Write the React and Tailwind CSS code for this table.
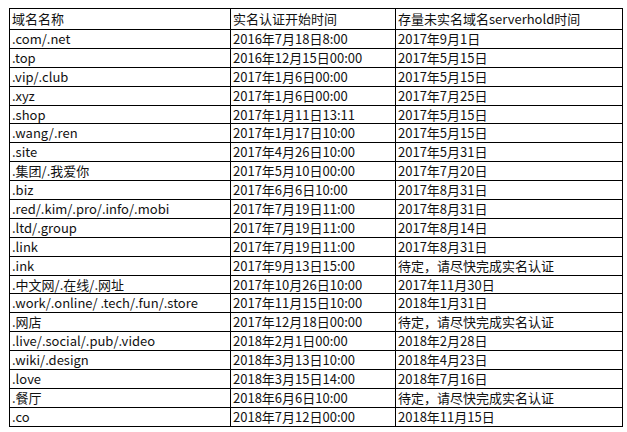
const rows = [
  ['.com/.net', '2016年7月18日8:00', '2017年9月1日'],
  ['.top', '2016年12月15日00:00', '2017年5月15日'],
  ['.vip/.club', '2017年1月6日00:00', '2017年5月15日'],
  ['.xyz', '2017年1月6日00:00', '2017年7月25日'],
  ['.shop', '2017年1月11日13:11', '2017年5月15日'],
  ['.wang/.ren', '2017年1月17日10:00', '2017年5月15日'],
  ['.site', '2017年4月26日10:00', '2017年5月31日'],
  ['.集团/.我爱你', '2017年5月10日00:00', '2017年7月20日'],
  ['.biz', '2017年6月6日10:00', '2017年8月31日'],
  ['.red/.kim/.pro/.info/.mobi', '2017年7月19日11:00', '2017年8月31日'],
  ['.ltd/.group', '2017年7月19日11:00', '2017年8月14日'],
  ['.link', '2017年7月19日11:00', '2017年8月31日'],
  ['.ink', '2017年9月13日15:00', '待定，请尽快完成实名认证'],
  ['.中文网/.在线/.网址', '2017年10月26日10:00', '2017年11月30日'],
  ['.work/.online/ .tech/.fun/.store', '2017年11月15日10:00', '2018年1月31日'],
  ['.网店', '2017年12月18日00:00', '待定，请尽快完成实名认证'],
  ['.live/.social/.pub/.video', '2018年2月1日00:00', '2018年2月28日'],
  ['.wiki/.design', '2018年3月13日10:00', '2018年4月23日'],
  ['.love', '2018年3月15日14:00', '2018年7月16日'],
  ['.餐厅', '2018年6月6日10:00', '待定，请尽快完成实名认证'],
  ['.co', '2018年7月12日00:00', '2018年11月15日'],
];

export default function App() {
  return (
    <div className="w-[627px] h-[432px] bg-white pt-[8px] pl-[9px] overflow-hidden">
      <table
        className="border-collapse table-fixed w-[613px] text-[13px] text-[#111]"
        style={{ fontFamily: '"Noto Sans CJK SC", "Noto Sans", sans-serif' }}
      >
        <colgroup>
          <col className="w-[221px]" />
          <col className="w-[165px]" />
          <col className="w-[227px]" />
        </colgroup>
        <thead>
          <tr className="h-[21px]">
            <th className="border border-black px-[2px] py-0 font-normal text-left leading-[18px]">域名名称</th>
            <th className="border border-black px-[2px] py-0 font-normal text-left leading-[18px]">实名认证开始时间</th>
            <th className="border border-black px-[2px] py-0 font-normal text-left leading-[18px]">存量未实名域名serverhold时间</th>
          </tr>
        </thead>
        <tbody>
          {rows.map((r, i) => (
            <tr key={i} className="h-[18.9px]">
              {r.map((c, j) => (
                <td key={j} className="border border-black px-[2px] py-0 leading-[16px] whitespace-nowrap">
                  {c}
                </td>
              ))}
            </tr>
          ))}
        </tbody>
      </table>
    </div>
  );
}
